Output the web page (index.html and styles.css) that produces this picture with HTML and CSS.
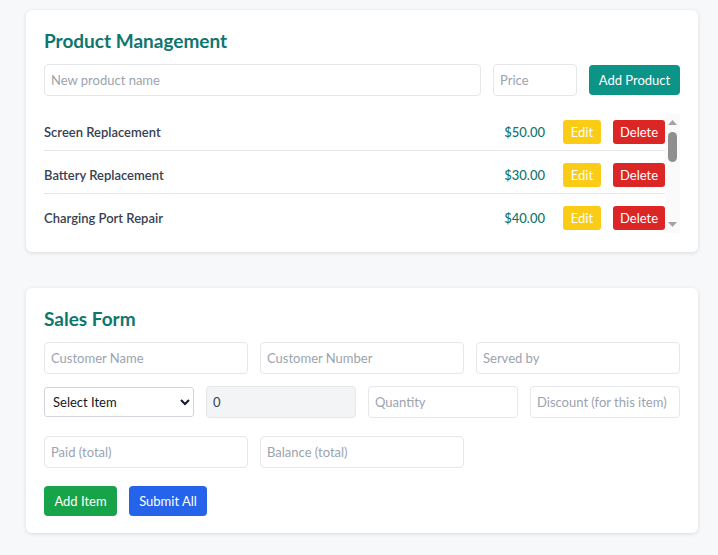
FILE: index.html
```html
<!DOCTYPE html>
<html lang="en">
<head>
<meta charset="utf-8">
<title>Product Management</title>
<link rel="stylesheet" href="styles.css">
</head>
<body>
<div class="page">
  <section class="card">
    <h2 class="card-title">Product Management</h2>
    <div class="product-form">
      <input class="field field-name" type="text" placeholder="New product name">
      <input class="field field-price" type="text" placeholder="Price">
      <button class="btn btn-teal">Add Product</button>
    </div>
    <div class="list-wrap">
      <ul class="product-list">
        <li class="product-row"><span class="product-name">Screen Replacement</span><span class="product-price">$50.00</span><button class="btn-sm btn-yellow">Edit</button><button class="btn-sm btn-red">Delete</button></li>
        <li class="product-row"><span class="product-name">Battery Replacement</span><span class="product-price">$30.00</span><button class="btn-sm btn-yellow">Edit</button><button class="btn-sm btn-red">Delete</button></li>
        <li class="product-row"><span class="product-name">Charging Port Repair</span><span class="product-price">$40.00</span><button class="btn-sm btn-yellow">Edit</button><button class="btn-sm btn-red">Delete</button></li>
      </ul>
      <div class="scrollbar" aria-hidden="true">
        <svg class="sb-arrow sb-up" width="9" height="5" viewBox="0 0 9 5"><path d="M0 5 L4.5 0 L9 5 Z" fill="#a3a3a3"/></svg>
        <div class="sb-thumb"></div>
        <div class="sb-space"></div>
        <svg class="sb-arrow sb-down" width="9" height="5" viewBox="0 0 9 5"><path d="M0 0 L9 0 L4.5 5 Z" fill="#a3a3a3"/></svg>
      </div>
    </div>
  </section>

  <section class="card card-sales">
    <h2 class="card-title">Sales Form</h2>
    <div class="grid grid-3 row-gap-12">
      <input class="field" type="text" placeholder="Customer Name">
      <input class="field" type="text" placeholder="Customer Number">
      <input class="field" type="text" placeholder="Served by">
    </div>
    <div class="grid grid-4 row-gap-18">
      <select class="select">
        <option>Select Item</option>
      </select>
      <input class="field field-readonly" type="text" value="0" readonly>
      <input class="field" type="text" placeholder="Quantity">
      <input class="field" type="text" placeholder="Discount (for this item)">
    </div>
    <div class="grid grid-3 row-gap-18">
      <input class="field" type="text" placeholder="Paid (total)">
      <input class="field" type="text" placeholder="Balance (total)">
    </div>
    <div class="actions">
      <button class="btn btn-green">Add Item</button>
      <button class="btn btn-blue">Submit All</button>
    </div>
  </section>
</div>
</body>
</html>
```

FILE: styles.css
```css
* { box-sizing: border-box; }

html, body {
  margin: 0;
  padding: 0;
  background: #f7f8fa;
  font-family: Lato, "Noto Sans", sans-serif;
  font-size: 13px;
  color: #374151;
}

.page {
  padding: 10px 20px 20px 26px;
}

.card {
  background: #ffffff;
  border-radius: 6px;
  box-shadow: 0 1px 4px rgba(0, 0, 0, 0.12);
  padding: 18px 18px 19px 18px;
}

.card-sales {
  margin-top: 36px;
  padding-bottom: 17px;
}

.card-title {
  margin: 0 0 10px 0;
  font-size: 19px;
  line-height: 26px;
  font-weight: 700;
  color: #0f766e;
}

.product-form {
  display: flex;
  align-items: center;
  gap: 12px;
}

.field {
  height: 32px;
  border: 1px solid #e5e7eb;
  border-radius: 4px;
  padding: 0 6px;
  font-family: inherit;
  font-size: 13px;
  color: #374151;
  background: #ffffff;
  outline: none;
  min-width: 0;
  width: 100%;
}

.field::placeholder { color: #9ca3af; }

.field-name { flex: 1; }
.field-price { width: 84px; flex: none; }

.field-readonly { background: #f3f4f6; }

.btn {
  height: 30px;
  border: none;
  border-radius: 4px;
  padding: 0 12px;
  font-family: inherit;
  font-size: 13px;
  color: #ffffff;
  cursor: pointer;
}

.btn-teal { background: #0d9488; flex: none; width: 91px; padding: 0; }
.btn-green { background: #16a34a; width: 73px; padding: 0; }
.btn-blue { background: #2563eb; width: 78px; padding: 0; }

.list-wrap {
  display: flex;
  margin-top: 18px;
  height: 119px;
}

.product-list {
  list-style: none;
  margin: 0;
  padding: 0;
  flex: 1;
  min-width: 0;
}

.product-row {
  display: flex;
  align-items: center;
  padding: 6px 0;
  border-bottom: 1px solid #e5e7eb;
  margin-bottom: 6px;
}

.product-row:last-child {
  border-bottom: none;
  margin-bottom: 0;
}

.product-name {
  flex: 1;
  font-weight: 600;
  color: #374151;
}

.product-price {
  font-weight: 500;
  color: #0f766e;
  margin-right: 18px;
}

.btn-sm {
  height: 24px;
  border: none;
  border-radius: 3px;
  padding: 0;
  font-family: inherit;
  font-size: 13px;
  color: #ffffff;
  cursor: pointer;
}

.btn-yellow { background: #facc15; margin-right: 12px; width: 38px; }
.btn-red { background: #dc2626; width: 52px; }

.scrollbar {
  width: 15px;
  flex: none;
  display: flex;
  flex-direction: column;
  align-items: center;
  background: #fafafa;
}

.sb-arrow { display: block; flex: none; }
.sb-up { margin-top: 6px; }
.sb-down { margin-bottom: 6px; }

.sb-thumb {
  width: 9px;
  height: 30px;
  margin-top: 7px;
  border-radius: 4.5px;
  background: #8f8f8f;
  flex: none;
}

.sb-space { flex: 1; }

.grid {
  display: grid;
  gap: 12px;
  align-items: center;
}

.grid-3 { grid-template-columns: repeat(3, 1fr); }
.grid-4 { grid-template-columns: repeat(4, 1fr); }

.row-gap-12 { margin-bottom: 12px; }
.row-gap-18 { margin-bottom: 18px; }

.select {
  height: 30px;
  width: 100%;
  border: 1px solid #d1d5db;
  border-radius: 3px;
  background: #ffffff;
  font-family: inherit;
  font-size: 13px;
  color: #111827;
  padding: 0 4px;
}

.actions {
  display: flex;
  gap: 12px;
}
```
